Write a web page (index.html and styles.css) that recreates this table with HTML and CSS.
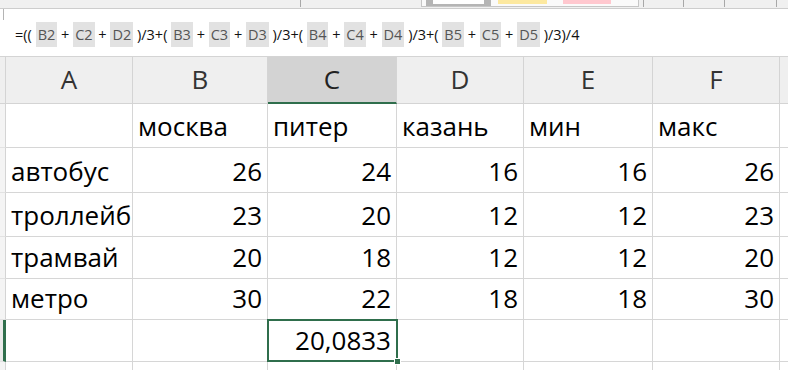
FILE: index.html
```html
<!DOCTYPE html>
<html lang="ru">
<head>
<meta charset="utf-8">
<title>Excel</title>
<link rel="stylesheet" href="styles.css">
</head>
<body>
<div class="app">
  <div class="ribbon-edge">
    <span class="tick tick-first"></span>
    <div class="gallery">
      <span class="swatch swatch-normal"></span>
      <span class="swatch swatch-neutral"></span>
      <span class="swatch swatch-bad"></span>
    </div>
    <span class="tick tick-a"></span>
    <span class="tick tick-b"></span>
    <span class="tick tick-c"></span>
    <span class="tick tick-d"></span>
  </div>

  <div class="formula-bar">
    <span class="fx-split"></span>
    <div class="formula">=(( <span class="ref">B2</span> + <span class="ref">C2</span> + <span class="ref">D2</span> )/3+( <span class="ref">B3</span> + <span class="ref">C3</span> + <span class="ref">D3</span> )/3+( <span class="ref">B4</span> + <span class="ref">C4</span> + <span class="ref">D4</span> )/3+( <span class="ref">B5</span> + <span class="ref">C5</span> + <span class="ref">D5</span> )/3)/4</div>
  </div>

  <div class="sheet">
    <div class="rh hd"></div>
    <div class="ch">A</div>
    <div class="ch">B</div>
    <div class="ch ch-active">C</div>
    <div class="ch">D</div>
    <div class="ch">E</div>
    <div class="ch">F</div>
    <div class="ch ch-last"></div>

    <div class="rh"></div>
    <div class="c"></div>
    <div class="c">москва</div>
    <div class="c">питер</div>
    <div class="c">казань</div>
    <div class="c">мин</div>
    <div class="c">макс</div>
    <div class="c c-last"></div>

    <div class="rh"></div>
    <div class="c">автобус</div>
    <div class="c n">26</div>
    <div class="c n">24</div>
    <div class="c n">16</div>
    <div class="c n">16</div>
    <div class="c n">26</div>
    <div class="c c-last"></div>

    <div class="rh"></div>
    <div class="c">троллейб</div>
    <div class="c n">23</div>
    <div class="c n">20</div>
    <div class="c n">12</div>
    <div class="c n">12</div>
    <div class="c n">23</div>
    <div class="c c-last"></div>

    <div class="rh"></div>
    <div class="c">трамвай</div>
    <div class="c n">20</div>
    <div class="c n">18</div>
    <div class="c n">12</div>
    <div class="c n">12</div>
    <div class="c n">20</div>
    <div class="c c-last"></div>

    <div class="rh"></div>
    <div class="c">метро</div>
    <div class="c n">30</div>
    <div class="c n">22</div>
    <div class="c n">18</div>
    <div class="c n">18</div>
    <div class="c n">30</div>
    <div class="c c-last"></div>

    <div class="rh rh-active"></div>
    <div class="c"></div>
    <div class="c"></div>
    <div class="c n c-active">20,0833<span class="sel"><span class="handle"></span></span></div>
    <div class="c"></div>
    <div class="c"></div>
    <div class="c"></div>
    <div class="c c-last"></div>

    <div class="rh"></div>
    <div class="c"></div>
    <div class="c"></div>
    <div class="c"></div>
    <div class="c"></div>
    <div class="c"></div>
    <div class="c"></div>
    <div class="c c-last"></div>
  </div>
</div>
</body>
</html>
```

FILE: styles.css
```css
html, body {
  margin: 0;
  padding: 0;
  background: #ffffff;
  overflow: hidden;
}

.app {
  width: 788px;
  height: 370px;
  overflow: hidden;
  font-family: "Open Sans", "Noto Sans", sans-serif;
  color: #000;
}

/* bottom edge of the ribbon */
.ribbon-edge {
  height: 8px;
  background: #f0f0f0;
  border-bottom: 1px solid #cdcdcd;
  display: flex;
  align-items: flex-start;
  box-sizing: content-box;
}

.tick {
  width: 1px;
  height: 7px;
  background: #a8a8a8;
  flex: none;
}
.tick-first { margin-left: 300px; }
.tick-a { margin-left: 4px; }
.tick-b { margin-left: 39px; }
.tick-c { margin-left: 40px; }
.tick-d { margin-left: 51px; }

.gallery {
  margin-left: 120px;
  width: 216px;
  height: 6px;
  border: 1px solid #c6c6c6;
  border-top: none;
  background: #fafafa;
  display: flex;
  align-items: flex-start;
  flex: none;
}

.swatch {
  height: 4px;
  flex: none;
}
.swatch-normal {
  margin-left: 4px;
  width: 51px;
  background: #ffffff;
  border: 7px solid #b5b5b5;
  border-top: none;
  border-bottom-width: 2px;
}
.swatch-neutral {
  margin-left: 7px;
  width: 49px;
  background: #fde9a0;
}
.swatch-bad {
  margin-left: 16px;
  width: 48px;
  background: #ffc8cf;
}

/* formula bar */
.formula-bar {
  height: 47px;
  border-bottom: 1px solid #d4d4d4;
  background: #ffffff;
  display: flex;
  align-items: center;
  position: relative;
}

.fx-split {
  position: absolute;
  left: 3px;
  top: 0;
  width: 1px;
  height: 11px;
  background: #b4b4b4;
}

.formula {
  margin-left: 15px;
  padding-top: 4px;
  font-size: 14.5px;
  white-space: pre;
  color: #111;
}

.ref {
  display: inline-block;
  background: #e2e2e2;
  color: #555;
  line-height: 25px;
  padding: 0 2px;
}

/* grid */
.sheet {
  display: grid;
  grid-template-columns: 6px 127px 135px 129px 127px 129px 127px 1fr;
  grid-template-rows: 47px 44px 45px 44px 42px 41px 42px 40px;
}

.rh {
  background: #f4f4f4;
  border-right: 1px solid #d4d4d4;
  border-bottom: 1px solid #e2e2e2;
  box-sizing: border-box;
}
.rh.hd {
  background: #efefef;
  border-bottom: 1px solid #d4d4d4;
}
.rh-active {
  border-right: 3px solid #2f6e4c;
  background: #e9e9e9;
}

.ch {
  background: #efefef;
  border-right: 1px solid #d4d4d4;
  border-bottom: 1px solid #d4d4d4;
  box-sizing: border-box;
  display: flex;
  align-items: center;
  justify-content: center;
  font-size: 26px;
  color: #333;
  padding-bottom: 2px;
}
.ch-active {
  background: #d3d3d3;
  border-bottom: 2px solid #2f6e4c;
  color: #222;
}

.c {
  border-right: 1px solid #d6d6d6;
  border-bottom: 1px solid #d6d6d6;
  box-sizing: border-box;
  display: flex;
  align-items: flex-end;
  font-size: 26px;
  line-height: 26px;
  padding: 0 5px 8px 5px;
  white-space: nowrap;
  overflow: hidden;
  color: #000;
}
.c.n {
  justify-content: flex-end;
  padding-right: 5px;
}
.c-active {
  position: relative;
  overflow: visible;
  padding-right: 7px;
}
.sel {
  position: absolute;
  left: -1px;
  top: -1px;
  right: -2px;
  bottom: -1px;
  border: 2px solid #2f6e4c;
  box-sizing: border-box;
  pointer-events: none;
}
.handle {
  position: absolute;
  right: -5px;
  bottom: -5px;
  width: 5px;
  height: 5px;
  background: #2f6e4c;
  border: 1px solid #ffffff;
}
```
